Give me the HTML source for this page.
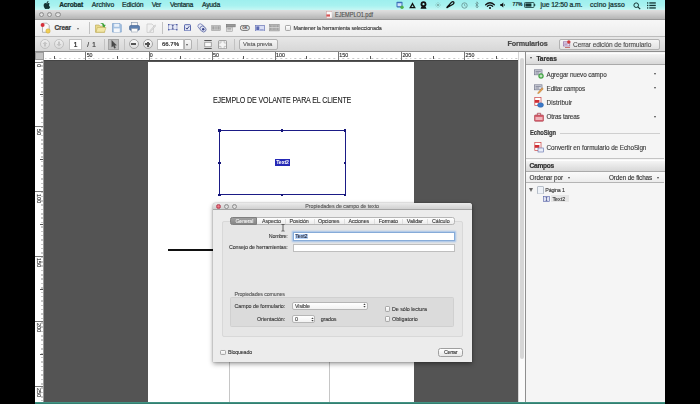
<!DOCTYPE html>
<html lang="es">
<head>
<meta charset="utf-8">
<title>EJEMPLO1.pdf</title>
<style>
*{box-sizing:border-box;margin:0;padding:0}
html,body{width:700px;height:404px;overflow:hidden;background:#000;font-family:"Liberation Sans",sans-serif;color:#222}
#stage{position:absolute;left:0;top:0;width:700px;height:404px;background:#000;overflow:hidden}
#screen{position:absolute;left:35px;top:0;width:630px;height:404px;background:#555;overflow:hidden}
#blur{position:absolute;left:0;top:0;width:630px;height:404px;filter:blur(0.55px)}
.abs,svg{position:absolute}
.t{position:absolute;white-space:nowrap;-webkit-text-stroke:0.22px}
#menubar{position:absolute;left:0;top:0;width:630px;height:9.6px;background:linear-gradient(#9eefee 0%,#a8f2f0 55%,#c6f7f4 100%)}
#titlebar{position:absolute;left:0;top:9.5px;width:630px;height:10px;background:linear-gradient(#dfdfdf 0%,#d2d2d2 35%,#b4b4b4 100%);border-bottom:1px solid #989898}
.tl{position:absolute;width:5.4px;height:5.4px;border-radius:50%;background:linear-gradient(#c9c9c9,#efefef);border:0.8px solid #8f8f8f}
#tb1{position:absolute;left:0;top:19.5px;width:630px;height:17.5px;background:linear-gradient(#f7f7f7,#ededed);border-bottom:1px solid #bcbcbc}
#tb2{position:absolute;left:0;top:37px;width:630px;height:14.5px;background:linear-gradient(#e7e7e7,#d7d7d7);border-bottom:1px solid #8e8e8e}
.sep{position:absolute;width:1px;background:#c2c2c2}
.btn{position:absolute;border:1px solid #b2b2b2;border-radius:2px;background:linear-gradient(#f6f6f6,#e2e2e2)}
.circ{position:absolute;width:10px;height:10px;border-radius:50%;border:1px solid #a5a5a5;background:linear-gradient(#fbfbfb,#dedede)}
#hruler{position:absolute;left:8.5px;top:51.5px;width:474.5px;height:9.2px;background:#fff;border-bottom:1.6px solid #444;overflow:hidden}
#vruler{position:absolute;left:0;top:60px;width:8.5px;height:342px;background:#fff;border-right:1px solid #999;overflow:hidden}
#rcorner{position:absolute;left:0;top:51.5px;width:8.5px;height:8.5px;background:#c4c4c4;border:1px solid #9a9a9a}
.rl{position:absolute;font-size:5.3px;color:#333;line-height:5px;white-space:nowrap;-webkit-text-stroke:0.15px}
.vl{position:absolute;font-size:5.3px;color:#333;-webkit-text-stroke:0.15px;line-height:5px;white-space:nowrap;transform-origin:0 0;transform:rotate(90deg)}
.tk{position:absolute;background:#555}
#doc{position:absolute;left:8.5px;top:60.6px;width:474.5px;height:341.400px;background:#545454;overflow:hidden}
#pg{position:absolute;left:104.5px;top:1.2px;width:266px;height:345px;background:#fff}
#vscroll{position:absolute;left:483px;top:51.5px;width:7px;height:350.500px;background:#fbfbfb;border-left:1px solid #d5d5d5}
#panel{position:absolute;left:490px;top:51.5px;width:140px;height:350.500px;background:#f5f5f5;border-left:1px solid #8f8f8f}
.ph{position:absolute;left:0;width:139px;background:linear-gradient(#f4f4f4,#d8d8d8);border-top:1px solid #fdfdfd;border-bottom:1px solid #aaa}
.dd{position:absolute;width:0;height:0;border-left:1.9px solid transparent;border-right:1.9px solid transparent;border-top:2.5px solid #484848}
#bottom{position:absolute;left:0;top:401.800px;width:630px;height:2.200px;background:linear-gradient(#4a9c8c,#2b7668)}
#dlg{position:absolute;left:178px;top:203.200px;width:259px;height:159.200px;background:#ececec;border-radius:3px 3px 0 0;box-shadow:0 2px 5px rgba(0,0,0,.38),0 0 1.200px rgba(0,0,0,.55)}
#dlgtitle{position:absolute;left:0;top:0;width:100%;height:7px;background:linear-gradient(#ebebeb,#d0d0d0);border-bottom:1px solid #a5a5a5;border-radius:3px 3px 0 0}
.inp{position:absolute;background:#fff;border:1px solid #b0b0b0}
.cb{position:absolute;width:5.4px;height:5.4px;background:linear-gradient(#fff,#e8e8e8);border:0.8px solid #a8a8a8;border-radius:1.2px}
.h{position:absolute;width:2.4px;height:2.4px;background:#15157a}
</style>
</head>
<body>
<div id="stage">
<div id="screen">
<div id="blur">

<!-- MENUBAR -->
<div id="menubar"></div>
<svg style="left:8.300px;top:0.600px" width="7.400" height="8" viewBox="0 0 15 17"><path d="M10.2 3.1c.7-.9 1.100-2 1-3.100-1 .1-2.100.7-2.800 1.500-.6.7-1.200 1.900-1 3 1.100 0 2.100-.6 2.800-1.400zM12.400 9c0-2.100 1.700-3.100 1.800-3.200-1-1.400-2.500-1.600-3-1.700-1.300-.1-2.500.8-3.200.8-.7 0-1.700-.7-2.800-.7-1.400 0-2.800.8-3.500 2.100-1.500 2.600-.4 6.500 1.100 8.600.7 1 1.600 2.200 2.700 2.100 1.100 0 1.500-.7 2.800-.7s1.700.7 2.800.7c1.200 0 1.900-1 2.600-2.100.8-1.200 1.200-2.400 1.200-2.400s-2.400-.9-2.500-3.500z" fill="#143534"/></svg>
<!-- menubar right icons -->
<svg style="left:361px;top:1.200px" width="8" height="8" viewBox="0 0 8 8"><rect x="0.500" y="0.800" width="6" height="5.600" rx="0.800" fill="#3b6fb8"/><rect x="1.500" y="2.200" width="4" height="3" fill="#cfe3ff"/><circle cx="6" cy="6.200" r="1.700" fill="#4fb04a"/></svg>
<svg style="left:373.500px;top:1.500px" width="7" height="7" viewBox="0 0 7 7"><path d="M3.500 0.300 L6.800 6.200 L0.200 6.200 Z" fill="#111"/><path d="M3.500 3 L4.600 5 L2.400 5 Z" fill="#a8f2ec"/></svg>
<svg style="left:385px;top:1px" width="7" height="8" viewBox="0 0 7 8"><circle cx="3.500" cy="3.200" r="2.900" fill="#111"/><circle cx="3.500" cy="3.200" r="1.100" fill="#a8f2ec"/><path d="M1.200 6 L5.800 6 L6.500 7.800 L0.500 7.800 Z" fill="#111"/></svg>
<svg style="left:399.500px;top:2px" width="6" height="6" viewBox="0 0 6 6"><circle cx="3" cy="3" r="1.300" fill="#7fb5b0"/><g stroke="#7fb5b0" stroke-width="0.600"><path d="M3 0v1M3 5v1M0 3h1M5 3h1M0.900 0.900l.7.7M4.400 4.400l.7.7M5.100 0.900l-.7.7M1.600 4.400l-.7.7"/></g></svg>
<svg style="left:411px;top:1.200px" width="8.500" height="7.500" viewBox="0 0 8.500 7.500"><path d="M1 6.500 L5.500 1.200 Q7 0.200 7.800 1.200 Q8.300 2.200 7 3.200 L3 5.500 Z" fill="none" stroke="#111" stroke-width="1.300"/><path d="M0.600 7 L2.500 5" stroke="#111" stroke-width="1.200"/></svg>
<svg style="left:425.500px;top:1.500px" width="7" height="7" viewBox="0 0 7 7"><circle cx="3.500" cy="3.500" r="2.700" fill="none" stroke="#6a9a98" stroke-width="0.900"/><path d="M3.500 1.800V3.600L4.700 4.200" fill="none" stroke="#6a9a98" stroke-width="0.700"/></svg>
<svg style="left:439.500px;top:1.200px" width="4" height="8" viewBox="0 0 4 8"><path d="M0.500 2.300 L3.200 5.400 L1.900 7 V0.800 L3.200 2.300 L0.500 5.400" fill="none" stroke="#5f8a88" stroke-width="0.700"/></svg>
<svg style="left:449.500px;top:1.500px" width="10" height="7.500" viewBox="0 0 10 7.500"><g fill="none" stroke="#111" stroke-linecap="round"><path d="M0.700 2.700 Q5 -1.200 9.300 2.700" stroke-width="1.300"/><path d="M2.300 4.300 Q5 2 7.700 4.300" stroke-width="1.200"/></g><circle cx="5" cy="6" r="1" fill="#111"/></svg>
<svg style="left:464.500px;top:2px" width="6" height="6" viewBox="0 0 6 6"><path d="M0.300 2 H1.600 L3.300 0.500 V5.500 L1.600 4 H0.300 Z" fill="#111"/><path d="M4.200 2 Q5 3 4.200 4" fill="none" stroke="#111" stroke-width="0.600"/></svg>
<svg style="left:488.500px;top:2px" width="12" height="6" viewBox="0 0 12 6"><rect x="0.500" y="0.500" width="9.500" height="5" rx="0.800" fill="none" stroke="#143534" stroke-width="0.800"/><rect x="10.200" y="2" width="1" height="2" fill="#143534"/><rect x="1.400" y="1.400" width="6" height="3.200" fill="#143534"/></svg>
<svg style="left:598px;top:1.500px" width="8" height="8" viewBox="0 0 8 8"><circle cx="3.200" cy="3.200" r="2.300" fill="none" stroke="#143534" stroke-width="1"/><path d="M4.900 4.900 L7.200 7.200" stroke="#143534" stroke-width="1.200"/></svg>
<svg style="left:611.600px;top:1.500px" width="9" height="7" viewBox="0 0 9 7"><g fill="#143534"><rect x="0" y="0.300" width="1.300" height="1.300"/><rect x="2.300" y="0.300" width="6.500" height="1.300"/><rect x="0" y="2.800" width="1.300" height="1.300"/><rect x="2.300" y="2.800" width="6.500" height="1.300"/><rect x="0" y="5.300" width="1.300" height="1.300"/><rect x="2.300" y="5.300" width="6.500" height="1.300"/></g></svg>

<!-- TITLEBAR -->
<div id="titlebar"></div>
<div class="tl" style="left:3.500px;top:11.900px"></div>
<div class="tl" style="left:12px;top:11.900px"></div>
<div class="tl" style="left:20.400px;top:11.900px"></div>
<svg style="left:290.500px;top:11px" width="6.500" height="7.500" viewBox="0 0 6.500 7.500"><rect x="0.400" y="0.400" width="5.700" height="6.700" fill="#fafafa" stroke="#c99" stroke-width="0.500"/><rect x="0.400" y="3.400" width="3.600" height="2.200" fill="#d65555"/></svg>

<!-- TOOLBAR 1 -->
<div id="tb1"></div>
<!-- crear icon -->
<svg style="left:4.600px;top:22.300px" width="11" height="11.500" viewBox="0 0 11 11.500"><path d="M2.500 1.200 H7 L9.200 3.500 V10.300 H2.500 Z" fill="#fafafa" stroke="#9a9a9a" stroke-width="0.700"/><circle cx="2.600" cy="3" r="2" fill="#d6303a"/><circle cx="8" cy="9" r="2.200" fill="#f1cf55" stroke="#c9a43a" stroke-width="0.500"/></svg>
<div class="dd" style="left:41.500px;top:27.500px;border-top-color:#666"></div>
<div class="sep" style="left:54px;top:22px;height:12px"></div>
<!-- folder -->
<svg style="left:60px;top:21.800px" width="11.500" height="11" viewBox="0 0 11.500 11"><path d="M0.500 3 H4 L5 4.200 H9.500 V10.300 H0.500 Z" fill="#e9d98a" stroke="#b9a650" stroke-width="0.600"/><path d="M1 10.200 L2.400 5.500 H11 L9.500 10.200 Z" fill="#f3e7a6" stroke="#b9a650" stroke-width="0.500"/><path d="M5 1.500 Q8.500 -0.200 9.600 3 L10.800 2.700 L9.300 5.600 L6.800 3.700 L8 3.400 Q7.300 1.700 5 1.500Z" fill="#3da23a"/></svg>
<!-- save -->
<svg style="left:77.400px;top:23.200px" width="9.800" height="9.600" viewBox="0 0 9.800 9.600"><path d="M0.500 0.500 H8 L9.300 1.800 V9.100 H0.500 Z" fill="#a6c2e2" stroke="#7b9fca" stroke-width="0.700"/><rect x="2.200" y="0.800" width="5" height="3" fill="#e9f0f8"/><rect x="1.800" y="5.400" width="6" height="3.700" fill="#f4f7fb"/></svg>
<!-- printer -->
<svg style="left:93.500px;top:22.300px" width="11" height="10.500" viewBox="0 0 11 10.500"><rect x="2.600" y="0.500" width="5.800" height="3.500" fill="#f4f4f4" stroke="#7d8fa8" stroke-width="0.600"/><rect x="0.500" y="3.600" width="10" height="4.600" rx="1.200" fill="#5b7fb0" stroke="#3e5f8e" stroke-width="0.600"/><rect x="2.400" y="6.600" width="6.200" height="3.400" fill="#fafafa" stroke="#8b98aa" stroke-width="0.500"/></svg>
<!-- edit disabled -->
<svg style="left:110.800px;top:22.800px" width="10.500" height="10" viewBox="0 0 10.500 10"><path d="M1 1 H6 L7.500 2.500 V9.400 H1 Z" fill="#f1f1f1" stroke="#c6c6c6" stroke-width="0.700"/><path d="M4 7.500 L9 1.800 L10 2.700 L5 8.300 L3.700 8.700Z" fill="#dcdcdc" stroke="#c2c2c2" stroke-width="0.500"/></svg>
<div class="sep" style="left:126.500px;top:22px;height:12px"></div>
<!-- text field tool -->
<svg style="left:133px;top:24.400px" width="9.500" height="6.400" viewBox="0 0 9.500 7" preserveAspectRatio="none"><rect x="0.500" y="0.800" width="8.500" height="5.400" fill="#e6e9f7" stroke="#7a84bc" stroke-width="0.600"/><path d="M3.800 1.600 H5.700 M4.750 1.600 V5.400 M3.800 5.400 H5.700" stroke="#2c357a" stroke-width="0.700" fill="none"/><rect x="0" y="0" width="1.400" height="1.400" fill="#4a58a0"/><rect x="8.100" y="0" width="1.400" height="1.400" fill="#4a58a0"/><rect x="0" y="5.600" width="1.400" height="1.400" fill="#4a58a0"/><rect x="8.100" y="5.600" width="1.400" height="1.400" fill="#4a58a0"/></svg>
<!-- checkbox tool -->
<svg style="left:149px;top:23.800px" width="7" height="7.500" viewBox="0 0 7 7.500"><rect x="0.500" y="0.700" width="6" height="6.200" rx="0.600" fill="#e3e8f7" stroke="#4b5aa6" stroke-width="0.900"/><path d="M1.800 3.800 L3 5.200 L5.300 2.200" fill="none" stroke="#2c357a" stroke-width="0.900"/></svg>
<!-- radio tool -->
<svg style="left:161.500px;top:22.800px" width="10" height="10" viewBox="0 0 10 10"><ellipse cx="4" cy="3.800" rx="3.400" ry="2.500" transform="rotate(40 4 3.800)" fill="#e8ebf6" stroke="#6873b0" stroke-width="0.700"/><ellipse cx="6" cy="6" rx="3.300" ry="2.600" transform="rotate(40 6 6)" fill="#dfe3f3" stroke="#56629f" stroke-width="0.700"/><circle cx="6.200" cy="6.200" r="1.200" fill="#39448a"/></svg>
<!-- list box -->
<svg style="left:176px;top:25.200px" width="9.800" height="5.800" viewBox="0 0 9.800 5.800"><rect x="0.300" y="0.300" width="9.200" height="5.200" rx="0.600" fill="#cdcdcd" stroke="#9a9a9a" stroke-width="0.600"/><rect x="1.300" y="1.300" width="2.100" height="3.200" fill="#a2a2a2"/><rect x="3.900" y="1.300" width="2.100" height="3.200" fill="#b2b2b2"/><rect x="6.500" y="1.300" width="2.100" height="3.200" fill="#a2a2a2"/></svg>
<!-- dropdown tool -->
<svg style="left:191px;top:23.800px" width="9.500" height="8" viewBox="0 0 9.500 8"><rect x="0.300" y="0.300" width="8.900" height="2.600" fill="#9a9a9a" stroke="#6d6d6d" stroke-width="0.500"/><rect x="0.300" y="3.200" width="6" height="4.400" fill="#e6e6e6" stroke="#8d8d8d" stroke-width="0.500"/><path d="M1.300 4.500H5.300M1.300 5.800H5.300" stroke="#8a8a8a" stroke-width="0.600"/></svg>
<!-- OK button -->
<svg style="left:205px;top:25.200px" width="9.800" height="5.800" viewBox="0 0 9.800 5.800"><rect x="0.400" y="0.400" width="9" height="5" rx="2.300" fill="#ececec" stroke="#555" stroke-width="0.800"/><text x="4.900" y="4.200" font-size="3.400" font-weight="bold" text-anchor="middle" fill="#333" font-family="Liberation Sans,sans-serif">OK</text></svg>
<!-- image/sign -->
<svg style="left:220px;top:24.800px" width="9.800" height="6.500" viewBox="0 0 9.800 6.500"><rect x="0.400" y="0.400" width="9" height="5.700" fill="#d9def5" stroke="#6a76b6" stroke-width="0.700"/><rect x="1.300" y="1.400" width="3" height="3.600" fill="#5a68b0"/><path d="M5 4.800H8.600" stroke="#5360a6" stroke-width="0.600"/></svg>
<!-- barcode -->
<svg style="left:234px;top:24.400px" width="10.500" height="7.200" viewBox="0 0 10.500 7.200"><rect x="0.300" y="0.300" width="9.900" height="6.600" fill="#c9c9c9" stroke="#8c8c8c" stroke-width="0.600"/><path d="M1.500 1.300V5.900M2.800 1.300V5.900M4.200 1.300V5.900M5.300 1.300V5.900M6.800 1.300V5.900M8.200 1.300V5.900M9 1.300V5.900" stroke="#8a8a8a" stroke-width="0.700"/><path d="M0.300 3.600H10.200" stroke="#d9d9d9" stroke-width="0.800"/></svg>
<div class="cb" style="left:250.300px;top:24.900px;width:5.800px;height:5.800px"></div>

<!-- TOOLBAR 2 -->
<div id="tb2"></div>
<div class="circ" style="left:4.600px;top:39px;opacity:.5"></div>
<div class="circ" style="left:18.800px;top:39px;opacity:.5"></div>
<svg style="left:6.600px;top:41px" width="6" height="6" viewBox="0 0 6 6"><path d="M3 0.500 L5.500 3 H4 V5.500 H2 V3 H0.500 Z" fill="#c4c4c4"/></svg>
<svg style="left:20.800px;top:41px" width="6" height="6" viewBox="0 0 6 6"><path d="M3 5.500 L5.500 3 H4 V0.500 H2 V3 H0.500 Z" fill="#c4c4c4"/></svg>
<div class="inp" style="left:33.800px;top:38.800px;width:13.600px;height:11px;border-color:#c2c2c2"></div>
<div class="sep" style="left:68.600px;top:39px;height:11px"></div>
<div class="abs" style="left:73px;top:38.500px;width:11px;height:11.500px;background:#bdbdbd;border:1px solid #a4a4a4"></div>
<svg style="left:75.500px;top:40px" width="6" height="9" viewBox="0 0 6 9"><path d="M0.800 0.500 V7 L2.300 5.600 L3.400 8.300 L4.500 7.800 L3.400 5.200 H5.400 Z" fill="#4a4a4a" stroke="#3a3a3a" stroke-width="0.400"/></svg>
<div class="sep" style="left:88.600px;top:39px;height:11px"></div>
<div class="circ" style="left:93.900px;top:39px"></div>
<div class="circ" style="left:107.900px;top:39px"></div>
<div class="abs" style="left:96.400px;top:43.200px;width:5px;height:1.700px;background:#555"></div>
<div class="abs" style="left:110.400px;top:43.200px;width:5px;height:1.700px;background:#555"></div>
<div class="abs" style="left:112.050px;top:41.500px;width:1.700px;height:5px;background:#555"></div>
<div class="inp" style="left:122.400px;top:39.300px;width:26.400px;height:10.400px;border-color:#bdbdbd"></div>
<div class="btn" style="left:148.600px;top:39.300px;width:8.600px;height:10.400px;border-radius:0 2px 2px 0"></div>
<div class="dd" style="left:151.200px;top:43.600px;border-top-color:#555"></div>
<div class="sep" style="left:162px;top:39px;height:11px"></div>
<svg style="left:169px;top:40px" width="8" height="9" viewBox="0 0 8 9"><rect x="0.800" y="2.200" width="6.400" height="4.600" fill="#fafafa" stroke="#777" stroke-width="0.600"/><path d="M0.300 0.500H7.700M0.300 8.500H7.700" stroke="#555" stroke-width="1"/></svg>
<svg style="left:183px;top:39.800px" width="9.200" height="9.400" viewBox="0 0 9.200 9.400"><rect x="0.600" y="0.600" width="8" height="8.200" rx="0.800" fill="#f4f4f4" stroke="#777" stroke-width="0.700"/><path d="M3 0.600V3H0.600M6.200 0.600V3H8.600M3 8.800V6.400H0.600M6.200 8.800V6.400H8.600" fill="none" stroke="#999" stroke-width="0.500"/></svg>
<div class="sep" style="left:198.600px;top:39px;height:11px"></div>
<div class="btn" style="left:204.400px;top:38.600px;width:39px;height:11.400px"></div>
<div class="btn" style="left:523.800px;top:38.600px;width:100.800px;height:11.600px"></div>
<svg style="left:527.500px;top:40.200px" width="8" height="8.500" viewBox="0 0 8 8.500"><rect x="0.400" y="1.800" width="6.400" height="4.200" fill="#e8e0ee" stroke="#8a5a9a" stroke-width="0.600"/><path d="M1.200 3.200H5.800M1.200 4.600H4.500" stroke="#8a5a9a" stroke-width="0.500"/><circle cx="5.800" cy="2" r="1.700" fill="#d23a3a"/><path d="M2 7.500 H7" stroke="#b44" stroke-width="0.700"/></svg>

<!-- RULERS -->
<div id="hruler">
<div class="abs" style="left:0;top:6px;width:475px;height:1.800px;background:repeating-linear-gradient(90deg,#c8c8c8 0,#c8c8c8 0.450px,#fff 0.450px,#fff 1.263px);background-position:0.3px 0"></div>
<div class="tk" style="left:10.28px;top:4.6px;width:0.7px;height:3px"></div>
<div class="tk" style="left:41.85px;top:0;width:0.7px;height:8px;background:#777"></div>
<span class="rl" style="left:43.15px;top:1.1px">50</span>
<div class="tk" style="left:73.43px;top:4.6px;width:0.7px;height:3px"></div>
<div class="tk" style="left:105.00px;top:0;width:0.7px;height:8px;background:#777"></div>
<span class="rl" style="left:106.30px;top:1.1px">0</span>
<div class="tk" style="left:136.57px;top:4.6px;width:0.7px;height:3px"></div>
<div class="tk" style="left:168.15px;top:0;width:0.7px;height:8px;background:#777"></div>
<span class="rl" style="left:169.45px;top:1.1px">50</span>
<div class="tk" style="left:199.72px;top:4.6px;width:0.7px;height:3px"></div>
<div class="tk" style="left:231.30px;top:0;width:0.7px;height:8px;background:#777"></div>
<span class="rl" style="left:232.60px;top:1.1px">100</span>
<div class="tk" style="left:262.88px;top:4.6px;width:0.7px;height:3px"></div>
<div class="tk" style="left:294.45px;top:0;width:0.7px;height:8px;background:#777"></div>
<span class="rl" style="left:295.75px;top:1.1px">150</span>
<div class="tk" style="left:326.02px;top:4.6px;width:0.7px;height:3px"></div>
<div class="tk" style="left:357.60px;top:0;width:0.7px;height:8px;background:#777"></div>
<span class="rl" style="left:358.90px;top:1.1px">200</span>
<div class="tk" style="left:389.17px;top:4.6px;width:0.7px;height:3px"></div>
<div class="tk" style="left:420.75px;top:0;width:0.7px;height:8px;background:#777"></div>
<span class="rl" style="left:422.05px;top:1.1px">250</span>
<div class="tk" style="left:452.32px;top:4.6px;width:0.7px;height:3px"></div>
</div>
<div id="rcorner"></div>

<!-- DOC -->
<div id="doc">
  <div id="pg">
    <!-- field rectangle: abs 219..345 x 130..195 ; page origin abs (148,61) -->
    <div class="abs" style="left:71px;top:68.200px;width:126.500px;height:65.500px;border:1px solid #1b1b86"></div>
    <div class="h" style="left:70.300px;top:67.500px"></div><div class="h" style="left:133px;top:67.500px"></div><div class="h" style="left:195.800px;top:67.500px"></div>
    <div class="h" style="left:70.300px;top:99.800px"></div><div class="h" style="left:195.800px;top:99.800px"></div>
    <div class="h" style="left:70.300px;top:132.000px"></div><div class="h" style="left:133px;top:132.000px"></div><div class="h" style="left:195.800px;top:132.000px"></div>
    <div class="abs" style="left:127.100px;top:97.600px;width:15.200px;height:6.700px;background:#2529b6"></div>
    <!-- black rule -->
    <div class="abs" style="left:20px;top:186.800px;width:60px;height:2px;background:#111"></div>
    <!-- vertical lines -->
    <div class="abs" style="left:80.600px;top:289.200px;width:1.600px;height:60px;background:#c6c6c6"></div>
    <div class="abs" style="left:180.800px;top:289.200px;width:1.600px;height:60px;background:#c6c6c6"></div>
  </div>
</div>
<div id="vruler">
<div class="abs" style="left:5.800px;top:0;width:1.800px;height:341px;background:repeating-linear-gradient(180deg,#c8c8c8 0,#c8c8c8 0.450px,#fff 0.450px,#fff 1.298px)"></div>
<div class="tk" style="top:1.50px;left:0;height:0.7px;width:8px;background:#777"></div>
<span class="vl" style="top:3.70px;left:6.4px">0</span>
<div class="tk" style="top:33.95px;left:4.6px;height:0.7px;width:3px"></div>
<div class="tk" style="top:66.40px;left:0;height:0.7px;width:8px;background:#777"></div>
<span class="vl" style="top:68.60px;left:6.4px">50</span>
<div class="tk" style="top:98.85px;left:4.6px;height:0.7px;width:3px"></div>
<div class="tk" style="top:131.30px;left:0;height:0.7px;width:8px;background:#777"></div>
<span class="vl" style="top:133.50px;left:6.4px">100</span>
<div class="tk" style="top:163.75px;left:4.6px;height:0.7px;width:3px"></div>
<div class="tk" style="top:196.20px;left:0;height:0.7px;width:8px;background:#777"></div>
<span class="vl" style="top:198.40px;left:6.4px">150</span>
<div class="tk" style="top:228.65px;left:4.6px;height:0.7px;width:3px"></div>
<div class="tk" style="top:261.10px;left:0;height:0.7px;width:8px;background:#777"></div>
<span class="vl" style="top:263.30px;left:6.4px">200</span>
<div class="tk" style="top:293.55px;left:4.6px;height:0.7px;width:3px"></div>
<div class="tk" style="top:326.00px;left:0;height:0.7px;width:8px;background:#777"></div>
<span class="vl" style="top:328.20px;left:6.4px">250</span>
</div>
<div id="vscroll"><div class="abs" style="left:0.900px;top:6px;width:4.400px;height:301px;border-radius:2.200px;background:#d6d6d6"></div></div>

<!-- RIGHT PANEL -->
<div id="panel">
  <div class="ph" style="top:1.200px;height:12.600px"></div>
  <div class="dd" style="left:3.800px;top:5.800px"></div>
  <!-- icons -->
  <svg style="left:7.500px;top:17.500px" width="10" height="10" viewBox="0 0 10 10"><rect x="0.400" y="0.800" width="7.600" height="5" fill="#cfd1da" stroke="#74788c" stroke-width="0.700"/><path d="M1.500 2.400H6.800M1.500 4H5" stroke="#6a6e84" stroke-width="0.700"/><circle cx="7" cy="7" r="2.500" fill="#4bb04a" stroke="#2e8a32" stroke-width="0.400"/><path d="M7 5.600V8.400M5.600 7H8.400" stroke="#fff" stroke-width="0.800"/></svg>
  <svg style="left:7.500px;top:32px" width="10" height="10" viewBox="0 0 10 10"><rect x="0.400" y="0.800" width="7.600" height="5" fill="#d4d6de" stroke="#74788c" stroke-width="0.700"/><path d="M1.500 2.400H6.800M1.500 4H5" stroke="#6a6e84" stroke-width="0.700"/><path d="M4 8.500 L8.200 3.800 L9.300 4.800 L5.200 9.300 L3.700 9.600Z" fill="#e8a24a" stroke="#a86a2a" stroke-width="0.400"/></svg>
  <svg style="left:8px;top:45.800px" width="10" height="11" viewBox="0 0 10 11"><rect x="0.800" y="0.500" width="6.200" height="8" fill="#fff" stroke="#c44" stroke-width="0.700"/><rect x="0.800" y="3" width="4.600" height="2.800" fill="#cf2f35"/><ellipse cx="6.500" cy="8" rx="3" ry="2.300" fill="#3a78c8" stroke="#245a9c" stroke-width="0.400"/></svg>
  <svg style="left:8px;top:60.500px" width="10" height="10" viewBox="0 0 10 10"><rect x="0.500" y="3" width="9" height="6.300" rx="0.800" fill="#d6606e" stroke="#a83c4a" stroke-width="0.600"/><path d="M3.300 3V1.300H6.700V3" fill="none" stroke="#a83c4a" stroke-width="0.800"/><rect x="1.500" y="5" width="7" height="3" fill="#efb4bb"/></svg>
  <svg style="left:8px;top:90.500px" width="10" height="11" viewBox="0 0 10 11"><rect x="0.800" y="0.500" width="6.200" height="8" fill="#fff" stroke="#c44" stroke-width="0.700"/><rect x="0.800" y="3" width="4.600" height="2.800" fill="#cf2f35"/><rect x="4" y="6" width="5.400" height="4" fill="#e9edf8" stroke="#5a6aa8" stroke-width="0.600"/></svg>
  <div class="dd" style="left:127.800px;top:21.400px"></div>
  <div class="dd" style="left:127.800px;top:35.600px"></div>
  <div class="dd" style="left:127.800px;top:64.400px"></div>
  <div class="abs" style="left:34px;top:81.400px;width:100px;height:1px;background:#cfcfcf"></div>
  <div class="abs" style="left:0;top:106.600px;width:138px;height:1px;background:#c4c4c4"></div>
  <div class="ph" style="top:108px;height:12.200px"></div>
  <div class="abs" style="left:0;top:120.200px;width:138px;height:11.600px;background:linear-gradient(#fafafa,#ececec);border-bottom:1px solid #b5b5b5"></div>
  <div class="dd" style="left:42.200px;top:125.400px"></div>
  <div class="dd" style="left:130.800px;top:125.400px"></div>
  <div class="abs" style="left:3.200px;top:136px;width:0;height:0;border-left:2.600px solid transparent;border-right:2.600px solid transparent;border-top:4.200px solid #666"></div>
  <svg style="left:10.500px;top:134.200px" width="7" height="8.500" viewBox="0 0 7 8.500"><rect x="0.500" y="0.500" width="6" height="7.500" rx="0.600" fill="#eef2f8" stroke="#8f9aaa" stroke-width="0.600"/></svg>
  <div class="abs" style="left:24.500px;top:143.800px;width:18px;height:7px;background:#e6e6e6"></div>
  <svg style="left:17px;top:144.200px" width="7" height="6" viewBox="0 0 7 6"><rect x="0.400" y="0.400" width="6.200" height="5.200" fill="#dfe3f3" stroke="#5663a8" stroke-width="0.600"/><path d="M2.700 1.400H4.300M3.500 1.400V4.600M2.700 4.600H4.300" stroke="#2c357a" stroke-width="0.600"/></svg>
</div>

<!-- DIALOG : origin abs (213,203) -->
<div id="dlg">
  <div id="dlgtitle"></div>
  <div class="tl" style="left:2.800px;top:0.900px;background:radial-gradient(circle at 50% 40%,#f08a92,#d23c50);border-color:#b8465a"></div>
  <div class="tl" style="left:10.600px;top:0.900px"></div>
  <div class="tl" style="left:18.600px;top:0.900px"></div>
  <!-- group box -->
  <div class="abs" style="left:8.800px;top:17.800px;width:241.200px;height:116px;background:#e6e6e6;border:1px solid #d8d8d8;border-radius:2px"></div>
  <!-- tabs -->
  <div class="abs" style="left:16.900px;top:14px;width:224.800px;height:8.200px;background:linear-gradient(#fefefe,#ececec);border:1px solid #b6b6b6;border-radius:2.500px"></div>
  <div class="abs" style="left:16.900px;top:14px;width:27.600px;height:8.200px;background:linear-gradient(#a0a0a0,#868686);border:1px solid #808080;border-radius:2.500px 0 0 2.500px"></div>
  <div class="sep" style="left:72.200px;top:16px;height:5px;background:#dedede"></div>
  <div class="sep" style="left:100.500px;top:16px;height:5px;background:#dedede"></div>
  <div class="sep" style="left:130.700px;top:16px;height:5px;background:#dedede"></div>
  <div class="sep" style="left:160.700px;top:16px;height:5px;background:#dedede"></div>
  <div class="sep" style="left:189.200px;top:16px;height:5px;background:#dedede"></div>
  <div class="sep" style="left:214.200px;top:16px;height:5px;background:#dedede"></div>
  <!-- inputs -->
  <div class="inp" style="left:79.600px;top:28.700px;width:162.800px;height:9px;border:1px solid #86abd8;box-shadow:0 0 1.500px 1px #a3c2e8"></div>
  <div class="abs" style="left:81.500px;top:30.400px;width:13.500px;height:5.800px;background:#b9d6fb"></div>
  <div class="inp" style="left:79.600px;top:40.400px;width:162.600px;height:8.200px;border-color:#bebebe"></div>
  <!-- I-beam cursor -->
  <svg style="left:67.500px;top:21px" width="4" height="7.500" viewBox="0 0 4 7.500"><path d="M0.500 0.400H1.600L2 0.900L2.400 0.400H3.500M2 0.900V6.600M0.500 7.100H1.600L2 6.600L2.400 7.100H3.500" fill="none" stroke="#222" stroke-width="0.700"/></svg>
  <!-- common props box -->
  <div class="abs" style="left:17px;top:93.800px;width:223.800px;height:30px;background:#dbdbdb;border:1px solid #d0d0d0;border-radius:1.500px"></div>
  <div class="inp" style="left:78.600px;top:98.500px;width:76.500px;height:8.300px;border-radius:2px;border-color:#b6b6b6;background:linear-gradient(#fff,#f2f2f2)"></div>
  <svg style="left:149.800px;top:100.200px" width="3" height="5" viewBox="0 0 3 5"><path d="M0.300 2 L1.500 0.500 L2.700 2 Z M0.300 3 L1.500 4.500 L2.700 3 Z" fill="#444"/></svg>
  <div class="inp" style="left:78.600px;top:111.800px;width:23.800px;height:8px;border-radius:2px;border-color:#b6b6b6;background:linear-gradient(#fff,#f2f2f2)"></div>
  <svg style="left:97.600px;top:113.400px" width="3" height="5" viewBox="0 0 3 5"><path d="M0.300 2 L1.500 0.500 L2.700 2 Z M0.300 3 L1.500 4.500 L2.700 3 Z" fill="#444"/></svg>
  <div class="cb" style="left:171.600px;top:103.200px"></div>
  <div class="cb" style="left:171.600px;top:113.200px"></div>
  <div class="cb" style="left:7.400px;top:146.500px"></div>
  <div class="btn" style="left:224.500px;top:144.600px;width:25.200px;height:9px;border-radius:2.500px;border-color:#9f9f9f;background:linear-gradient(#fff,#e6e6e6)"></div>
</div>

<div id="bottom"></div>

<span class="t" style="left:24.20px;top:1.07px;font-size:6.55px;line-height:7.86px;color:#14302f;letter-spacing:-0.136px;font-family:'Liberation Sans',sans-serif;font-weight:bold;">Acrobat</span>
<span class="t" style="left:56.80px;top:0.91px;font-size:6.81px;line-height:8.17px;color:#14302f;letter-spacing:-0.044px;">Archivo</span>
<span class="t" style="left:87.00px;top:0.91px;font-size:6.81px;line-height:8.17px;color:#14302f;letter-spacing:-0.121px;">Edición</span>
<span class="t" style="left:116.80px;top:0.91px;font-size:6.81px;line-height:8.17px;color:#14302f;letter-spacing:-0.410px;">Ver</span>
<span class="t" style="left:135.00px;top:0.91px;font-size:6.81px;line-height:8.17px;color:#14302f;letter-spacing:-0.286px;">Ventana</span>
<span class="t" style="left:167.00px;top:0.91px;font-size:6.81px;line-height:8.17px;color:#14302f;letter-spacing:-0.240px;">Ayuda</span>
<span class="t" style="left:477.50px;top:2.06px;font-size:4.9px;line-height:5.88px;color:#14302f;letter-spacing:0.068px;">77%</span>
<span class="t" style="left:505.50px;top:0.91px;font-size:6.81px;line-height:8.17px;color:#14302f;letter-spacing:-0.082px;">jue 12:50 a.m.</span>
<span class="t" style="left:555.00px;top:0.91px;font-size:6.81px;line-height:8.17px;color:#14302f;letter-spacing:0.121px;">ccino jasso</span>
<span class="t" style="left:299.50px;top:10.80px;font-size:6.5px;line-height:7.80px;color:#4a4a4a;letter-spacing:-0.050px;-webkit-text-stroke:0.1px;transform:scaleX(0.8595);transform-origin:0 50%;">EJEMPLO1.pdf</span>
<span class="t" style="left:19.50px;top:24.26px;font-size:6.57px;line-height:7.88px;color:#3a3a3a;letter-spacing:-0.135px;font-family:'Liberation Sans',sans-serif;font-weight:bold;">Crear</span>
<span class="t" style="left:258.50px;top:24.96px;font-size:5.4px;line-height:6.48px;color:#333;letter-spacing:-0.097px;-webkit-text-stroke:0.1px;">Mantener la herramienta seleccionada</span>
<span class="t" style="left:38.80px;top:40.64px;font-size:6.6px;line-height:7.92px;color:#222;letter-spacing:0.000px;">1</span>
<span class="t" style="left:52.20px;top:40.76px;font-size:6.4px;line-height:7.68px;color:#444;letter-spacing:0.697px;">/ 1</span>
<span class="t" style="left:127.00px;top:41.00px;font-size:6.0px;line-height:7.20px;color:#333;letter-spacing:-0.003px;">66.7%</span>
<span class="t" style="left:208.00px;top:41.12px;font-size:5.8px;line-height:6.96px;color:#555;letter-spacing:-0.097px;-webkit-text-stroke:0.1px;">Vista previa</span>
<span class="t" style="left:472.50px;top:40.07px;font-size:7.21px;line-height:8.65px;color:#4a4a4a;letter-spacing:-0.146px;font-family:'Liberation Sans',sans-serif;font-weight:bold;">Formularios</span>
<span class="t" style="left:538.00px;top:40.66px;font-size:6.57px;line-height:7.88px;color:#505050;letter-spacing:-0.111px;-webkit-text-stroke:0.12px;">Cerrar edición de formulario</span>
<span class="t" style="left:501.40px;top:54.65px;font-size:6.58px;line-height:7.90px;color:#333;letter-spacing:-0.056px;font-family:'Liberation Sans',sans-serif;font-weight:bold;">Tareas</span>
<span class="t" style="left:511.60px;top:70.59px;font-size:6.35px;line-height:7.62px;color:#3a3a3a;letter-spacing:-0.128px;-webkit-text-stroke:0.12px;">Agregar nuevo campo</span>
<span class="t" style="left:511.60px;top:84.79px;font-size:6.35px;line-height:7.62px;color:#3a3a3a;letter-spacing:-0.166px;-webkit-text-stroke:0.12px;">Editar campos</span>
<span class="t" style="left:511.60px;top:98.99px;font-size:6.35px;line-height:7.62px;color:#3a3a3a;letter-spacing:0.067px;-webkit-text-stroke:0.12px;">Distribuir</span>
<span class="t" style="left:511.60px;top:113.39px;font-size:6.35px;line-height:7.62px;color:#3a3a3a;letter-spacing:-0.159px;-webkit-text-stroke:0.12px;">Otras tareas</span>
<span class="t" style="left:495.00px;top:129.18px;font-size:6.7px;line-height:8.04px;color:#3a3a3a;letter-spacing:-0.100px;font-family:'Liberation Sans',sans-serif;font-weight:bold;transform:scaleX(0.8654);transform-origin:0 50%;">EchoSign</span>
<span class="t" style="left:511.60px;top:144.39px;font-size:6.35px;line-height:7.62px;color:#3a3a3a;letter-spacing:-0.072px;-webkit-text-stroke:0.12px;">Convertir en formulario de EchoSign</span>
<span class="t" style="left:494.60px;top:161.65px;font-size:6.58px;line-height:7.90px;color:#333;letter-spacing:-0.261px;font-family:'Liberation Sans',sans-serif;font-weight:bold;">Campos</span>
<span class="t" style="left:494.60px;top:174.19px;font-size:6.35px;line-height:7.62px;color:#333;letter-spacing:-0.073px;-webkit-text-stroke:0.12px;">Ordenar por</span>
<span class="t" style="left:574.00px;top:174.19px;font-size:6.35px;line-height:7.62px;color:#333;letter-spacing:-0.118px;-webkit-text-stroke:0.12px;">Orden de fichas</span>
<span class="t" style="left:510.30px;top:186.60px;font-size:5.33px;line-height:6.40px;color:#333;letter-spacing:-0.213px;-webkit-text-stroke:0.1px;">Página 1</span>
<span class="t" style="left:517.40px;top:195.70px;font-size:5.33px;line-height:6.40px;color:#333;letter-spacing:0.015px;-webkit-text-stroke:0.1px;">Text2</span>
<span class="t" style="left:177.80px;top:95.28px;font-size:8.7px;line-height:10.44px;color:#1c1c1c;letter-spacing:-0.150px;font-family:'Liberation Sans',sans-serif;-webkit-text-stroke:0.1px;transform:scaleX(0.8145);transform-origin:0 50%;">EJEMPLO DE VOLANTE PARA EL CLIENTE</span>
<span class="t" style="left:241.20px;top:159.38px;font-size:5.2px;line-height:6.24px;color:#fff;letter-spacing:-0.102px;font-family:'Liberation Sans',sans-serif;font-weight:bold;-webkit-text-stroke:0;">Text2</span>
<span class="t" style="left:270.30px;top:203.39px;font-size:5.35px;line-height:6.42px;color:#555;letter-spacing:-0.061px;-webkit-text-stroke:0.1px;">Propiedades de campo de texto</span>
<span class="t" style="left:200.40px;top:218.17px;font-size:5.21px;line-height:6.25px;color:#fff;letter-spacing:-0.103px;-webkit-text-stroke:0.05px;">General</span>
<span class="t" style="left:227.00px;top:218.19px;font-size:5.35px;line-height:6.42px;color:#363636;letter-spacing:-0.074px;-webkit-text-stroke:0.1px;">Aspecto</span>
<span class="t" style="left:254.60px;top:218.19px;font-size:5.35px;line-height:6.42px;color:#363636;letter-spacing:-0.139px;-webkit-text-stroke:0.1px;">Posición</span>
<span class="t" style="left:283.00px;top:218.19px;font-size:5.35px;line-height:6.42px;color:#363636;letter-spacing:-0.148px;-webkit-text-stroke:0.1px;">Opciones</span>
<span class="t" style="left:313.60px;top:218.19px;font-size:5.35px;line-height:6.42px;color:#363636;letter-spacing:-0.161px;-webkit-text-stroke:0.1px;">Acciones</span>
<span class="t" style="left:343.70px;top:218.19px;font-size:5.35px;line-height:6.42px;color:#363636;letter-spacing:-0.114px;-webkit-text-stroke:0.1px;">Formato</span>
<span class="t" style="left:371.80px;top:218.19px;font-size:5.35px;line-height:6.42px;color:#363636;letter-spacing:-0.034px;-webkit-text-stroke:0.1px;">Validar</span>
<span class="t" style="left:396.90px;top:218.19px;font-size:5.35px;line-height:6.42px;color:#363636;letter-spacing:-0.003px;-webkit-text-stroke:0.1px;">Cálculo</span>
<span class="t" style="left:233.80px;top:233.19px;font-size:5.35px;line-height:6.42px;color:#363636;letter-spacing:-0.242px;-webkit-text-stroke:0.1px;">Nombre:</span>
<span class="t" style="left:260.20px;top:233.19px;font-size:5.35px;line-height:6.42px;color:#223;letter-spacing:-0.096px;-webkit-text-stroke:0.1px;">Text2</span>
<span class="t" style="left:194.00px;top:244.39px;font-size:5.35px;line-height:6.42px;color:#363636;letter-spacing:-0.108px;-webkit-text-stroke:0.1px;">Consejo de herramientas:</span>
<span class="t" style="left:199.50px;top:290.99px;font-size:5.35px;line-height:6.42px;color:#555;letter-spacing:-0.150px;-webkit-text-stroke:0.1px;">Propiedades comunes</span>
<span class="t" style="left:199.50px;top:302.99px;font-size:5.35px;line-height:6.42px;color:#363636;letter-spacing:-0.035px;-webkit-text-stroke:0.1px;">Campo de formulario:</span>
<span class="t" style="left:259.90px;top:302.99px;font-size:5.35px;line-height:6.42px;color:#363636;letter-spacing:-0.079px;-webkit-text-stroke:0.1px;">Visible</span>
<span class="t" style="left:222.00px;top:315.59px;font-size:5.35px;line-height:6.42px;color:#363636;letter-spacing:-0.052px;-webkit-text-stroke:0.1px;">Orientación:</span>
<span class="t" style="left:259.90px;top:315.59px;font-size:5.35px;line-height:6.42px;color:#363636;letter-spacing:0.000px;-webkit-text-stroke:0.1px;">0</span>
<span class="t" style="left:285.70px;top:315.59px;font-size:5.35px;line-height:6.42px;color:#363636;letter-spacing:-0.108px;-webkit-text-stroke:0.1px;">grados</span>
<span class="t" style="left:357.00px;top:305.59px;font-size:5.35px;line-height:6.42px;color:#363636;letter-spacing:-0.050px;-webkit-text-stroke:0.1px;">De sólo lectura</span>
<span class="t" style="left:357.00px;top:315.59px;font-size:5.35px;line-height:6.42px;color:#363636;letter-spacing:-0.005px;-webkit-text-stroke:0.1px;">Obligatorio</span>
<span class="t" style="left:193.00px;top:348.99px;font-size:5.35px;line-height:6.42px;color:#363636;letter-spacing:-0.175px;-webkit-text-stroke:0.1px;">Bloqueado</span>
<span class="t" style="left:408.90px;top:348.99px;font-size:5.35px;line-height:6.42px;color:#363636;letter-spacing:-0.292px;-webkit-text-stroke:0.1px;">Cerrar</span>
</div>
</div>
</div>
</body>
</html>
